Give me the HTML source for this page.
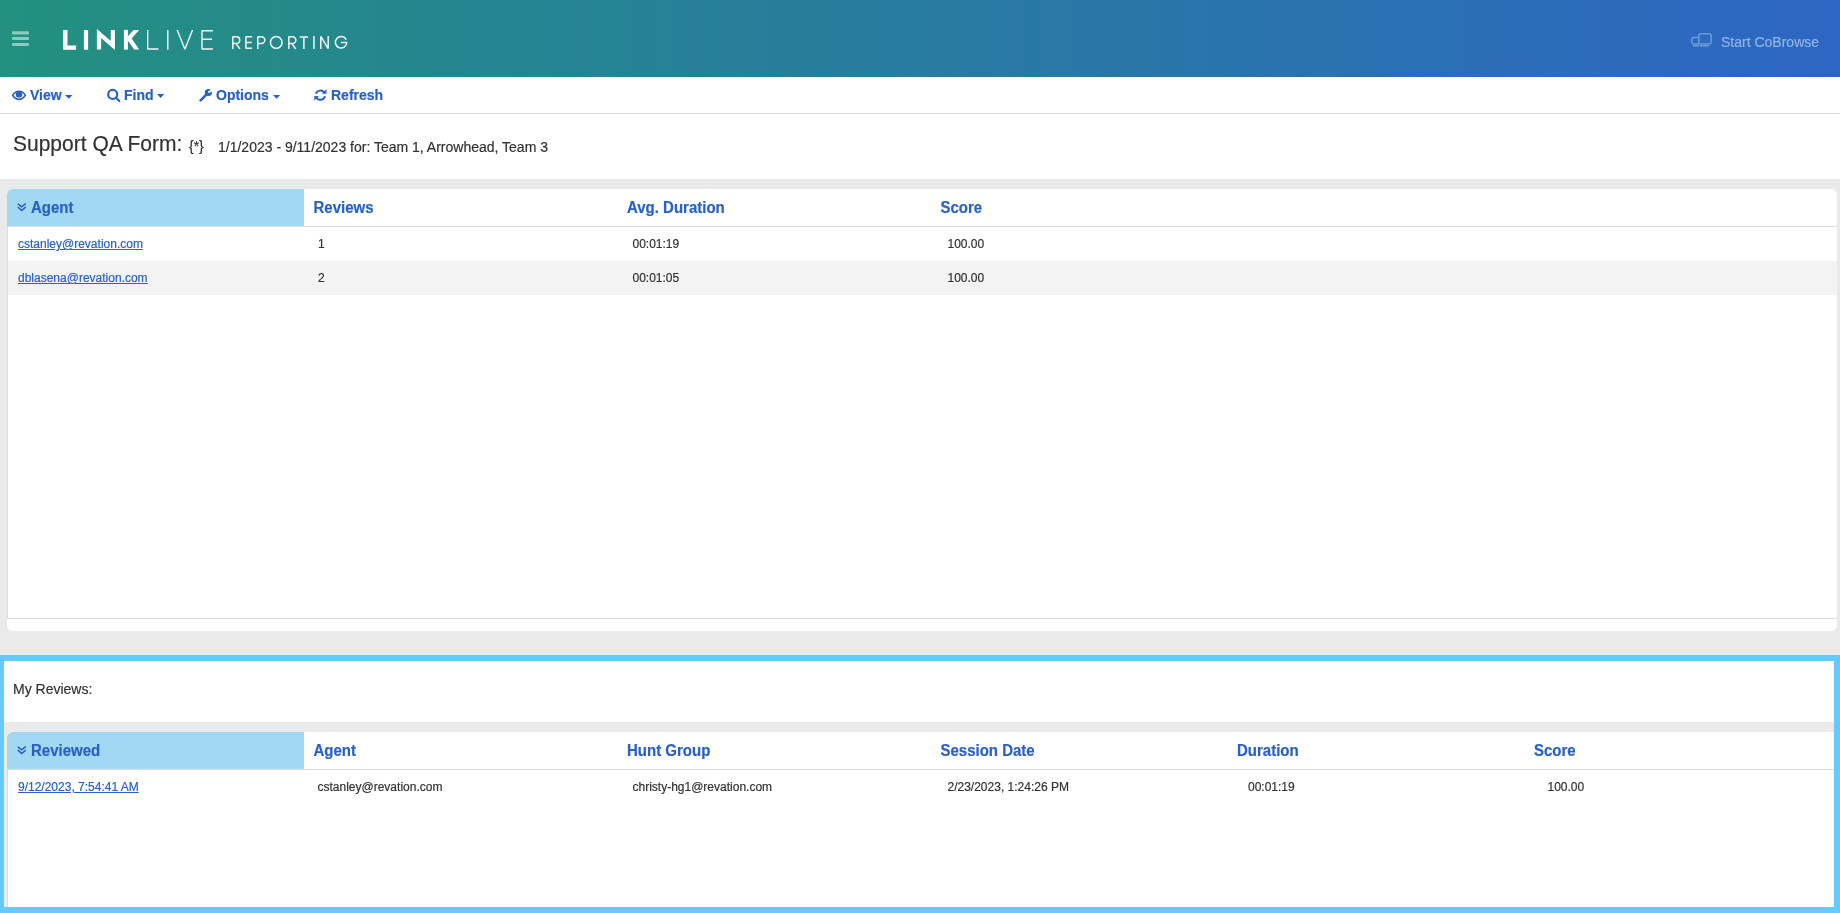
<!DOCTYPE html>
<html><head><meta charset="utf-8">
<style>
*{box-sizing:border-box;margin:0;padding:0}
body{will-change:transform}
html,body{width:1840px;height:913px;overflow:hidden;background:#fff;font-family:"Liberation Sans",sans-serif;color:#333}
.a{-webkit-text-stroke-width:0.2px}
.a{position:absolute;white-space:nowrap}
.hdr{left:0;top:0;width:1840px;height:77px;background:linear-gradient(90deg,#239080 0%,#287ba0 50%,#2d66c4 100%)}
.tbline{left:0;top:113px;width:1840px;height:1px;background:#dcdcdc}
.tbt{font-size:14px;font-weight:bold;color:#2962c4;line-height:16px;top:87px}
.gray{background:#eaeaea}
.panel{background:#fff}
.th{font-size:15px;font-weight:bold;color:#2962c4;line-height:17px;transform-origin:0 14px;transform:translateY(0.25px) scaleY(1.05)}
.td{font-size:12px;color:#333;line-height:14px}
.lnk{color:#2962c4;text-decoration:underline}
</style></head><body>
<!-- header -->
<div class="a hdr"></div>
<svg class="a" style="left:0;top:0" width="400" height="77" viewBox="0 0 400 77">
  <g fill="#8acbbf">
    <rect x="12" y="31.2" width="17" height="3.4" rx="1"/>
    <rect x="12" y="37.1" width="17" height="3" rx="1"/>
    <rect x="12" y="43" width="17" height="3" rx="1"/>
  </g>
  <g fill="#fff">
    <path d="M63.1,30H67.5V45.6H76.1V49.7H63.1Z"/>
    <rect x="83.9" y="30" width="4.2" height="19.7"/>
    <path d="M96.9,29.1L110.8,41V29.9H114.9V49.9L101.1,38V49.6H96.9Z"/>
    <rect x="123.9" y="29.9" width="4" height="19.7"/>
    <path d="M127.9,36.2L133.6,29.9H139.1L131.7,38.6L139.2,49.6H134.2L128.3,41.2L127.9,41.6Z"/>
  </g>
  <g fill="none" stroke="#f2f7f6" stroke-width="1.4" stroke-linejoin="bevel">
    <path d="M147.7,30V49H158.5"/>
    <path d="M167.8,30V49.7"/>
    <path d="M177.2,30L184.9,49.2L192.5,30"/>
    <path d="M213,30.7H202V49H213M202,39.3H212.1"/>
  </g>
  <g fill="none" stroke="#f2f7f6" stroke-width="1.5" stroke-linejoin="bevel">
    <path d="M232.8,49V36.7H236.4A3.35,3.35 0 0 1 236.4,43.4H232.8M235.9,43.4L239.9,49"/>
    <path d="M252.1,36.7H245.9V48.3H252.1M245.9,42.4H251.8"/>
    <path d="M257.8,49V36.7H261.4A3.4,3.4 0 0 1 261.4,43.5H257.8"/>
    <ellipse cx="276.25" cy="42.45" rx="5.8" ry="5.9"/>
    <path d="M288.8,49V36.7H292.4A3.35,3.35 0 0 1 292.4,43.6H288.8M291.9,43.6L295.7,49"/>
    <path d="M299.8,36.9H308M303.9,36.9V49"/>
    <path d="M313.95,36V49"/>
    <path d="M320.75,49V36.4L328.2,48.6V36"/>
    <path d="M346.2,39.6A5.75,5.75 0 1 0 346.85,42.5H340.8"/>
  </g>
</svg>
<svg class="a" style="left:1686px;top:28px" width="30" height="24" viewBox="1686 28 30 24">
  <g fill="none" stroke="#6a9ad6" stroke-width="1.6">
    <path d="M1698.9,37.5H1693.5Q1691.9,37.5 1691.9,39.1V42.4Q1691.9,44 1693.5,44H1698.9"/>
    <rect x="1698.9" y="33.8" width="12.2" height="10.2" rx="2"/>
  </g>
  <g fill="#6a9ad6">
    <rect x="1693" y="45" width="6" height="1.6"/>
    <rect x="1700" y="45" width="9" height="1.6"/>
  </g>
</svg>
<div class="a" style="left:1721px;top:34px;font-size:14px;line-height:16px;color:#90b3e4;transform-origin:0 12.6px;transform:scaleY(1.07)">Start CoBrowse</div>

<!-- toolbar -->
<div class="a tbline"></div>
<svg class="a" style="left:0;top:77px" width="400" height="36" viewBox="0 77 400 36">
  <g fill="#2962c4">
    <path fill-rule="evenodd" d="M11.6,95.3C13.8,91.7 16.2,90.4 19,90.4C21.8,90.4 24.2,91.7 26.3,95.3C24.2,98.9 21.8,100.2 19,100.2C16.2,100.2 13.8,98.9 11.6,95.3ZM13.6,95.3C15.2,97.6 17,98.5 19,98.5C21,98.5 22.8,97.6 24.4,95.3C22.8,93 21,92.1 19,92.1C17,92.1 15.2,93 13.6,95.3Z"/>
    <circle cx="19" cy="94.4" r="3.2"/>
    <path d="M65,95H72.6L68.8,98.8Z"/>
    <path d="M157,94.1H164.3L160.65,97.9Z"/>
    <path d="M273,95H280.2L276.6,98.8Z"/>
  </g>
  <g fill="none" stroke="#2962c4" stroke-width="2.2" stroke-linecap="round">
    <circle cx="112.7" cy="94.4" r="4.5"/>
    <path d="M116,97.8L119.3,101"/>
  </g>
  <g fill="#2962c4">
    <path d="M200.6,100.4L206.6,94.3" stroke="#2962c4" stroke-width="2.6" stroke-linecap="round"/>
    <circle cx="208.4" cy="92.5" r="3.6"/>
    <path d="M209,91.9L214,89.4" stroke="#fff" stroke-width="2.0" stroke-linecap="round"/>
  </g>
  <g fill="none" stroke="#2962c4" stroke-width="2">
    <path d="M315.9,93.7A4.8,4.8 0 0 1 324.3,92.6"/>
    <path d="M325,96.3A4.8,4.8 0 0 1 316.5,97.85"/>
  </g>
  <g fill="#2962c4">
    <path d="M321.8,93.7H326.5V89.2L324.3,91.2Z"/>
    <path d="M314.3,96H319L316.6,98.3L314.3,100.8Z"/>
  </g>
</svg>
<div class="a tbt" style="left:30px">View</div>
<div class="a tbt" style="left:124px">Find</div>
<div class="a tbt" style="left:216px">Options</div>
<div class="a tbt" style="left:331px">Refresh</div>

<!-- title -->
<div class="a" style="left:13px;top:131px;font-size:21px;line-height:24px;color:#333;transform-origin:0 19px;transform:translateY(0.8px) scaleY(1.071)">Support QA Form:</div>
<div class="a" style="left:189px;top:138px;font-size:14px;line-height:16px;color:#333">{*}</div>
<div class="a" style="left:218px;top:139px;font-size:14px;line-height:16px;color:#333">1/1/2023 - 9/11/2023 for: Team 1, Arrowhead, Team 3</div>

<!-- section 1 -->
<div class="a gray" style="left:0;top:179px;width:1840px;height:476px"></div>
<div class="a panel" style="left:7px;top:189px;width:1830px;height:442px;border-radius:6px"></div>
<div class="a" style="left:7px;top:189px;width:297px;height:37px;background:#a3d8f3;border-top-left-radius:6px"></div>
<div class="a" style="left:7px;top:226px;width:1830px;height:1px;background:#dcdcdc"></div>
<div class="a" style="left:7px;top:227px;width:1px;height:392px;background:#dcdcdc"></div>
<div class="a" style="left:7px;top:618px;width:1830px;height:1px;background:#dcdcdc"></div>
<div class="a" style="left:8px;top:261px;width:1829px;height:34px;background:#f3f3f3"></div>
<svg class="a" style="left:0;top:189px" width="40" height="37" viewBox="0 189 40 37">
  <g fill="none" stroke="#2962c4" stroke-width="1.5" stroke-linecap="round">
    <path d="M18.2,204.1L21.7,206.9L25.4,203.9"/>
    <path d="M18.2,207.4L21.7,210.5L25.4,207.4"/>
  </g>
</svg>
<div class="a th" style="left:31px;top:199px">Agent</div>
<div class="a th" style="left:313.5px;top:199px">Reviews</div>
<div class="a th" style="left:627px;top:199px">Avg. Duration</div>
<div class="a th" style="left:940.5px;top:199px">Score</div>

<div class="a td lnk" style="left:18px;top:237px">cstanley@revation.com</div>
<div class="a td" style="left:318px;top:237px">1</div>
<div class="a td" style="left:632.5px;top:237px">00:01:19</div>
<div class="a td" style="left:947.5px;top:237px">100.00</div>
<div class="a td lnk" style="left:18px;top:271px">dblasena@revation.com</div>
<div class="a td" style="left:318px;top:271px">2</div>
<div class="a td" style="left:632.5px;top:271px">00:01:05</div>
<div class="a td" style="left:947.5px;top:271px">100.00</div>

<!-- section 2 -->
<div class="a" style="left:0;top:655px;width:1840px;height:258px;background:#66c9ff"></div>
<div class="a panel" style="left:4px;top:661px;width:1830px;height:246px"></div>
<div class="a" style="left:13px;top:681px;font-size:14px;line-height:16px;color:#333">My Reviews:</div>
<div class="a gray" style="left:4px;top:722px;width:1830px;height:185px"></div>
<div class="a panel" style="left:7px;top:732px;width:1827px;height:175px;border-top-left-radius:6px"></div>
<div class="a" style="left:7px;top:732px;width:297px;height:37px;background:#a3d8f3;border-top-left-radius:6px"></div>
<div class="a" style="left:7px;top:769px;width:1827px;height:1px;background:#dcdcdc"></div>
<div class="a" style="left:7px;top:770px;width:1px;height:137px;background:#dcdcdc"></div>
<svg class="a" style="left:0;top:732px" width="40" height="37" viewBox="0 732 40 37">
  <g fill="none" stroke="#2962c4" stroke-width="1.5" stroke-linecap="round">
    <path d="M18.2,747.1L21.7,749.9L25.4,746.9"/>
    <path d="M18.2,750.4L21.7,753.5L25.4,750.4"/>
  </g>
</svg>
<div class="a th" style="left:31px;top:742px">Reviewed</div>
<div class="a th" style="left:313.5px;top:742px">Agent</div>
<div class="a th" style="left:627px;top:742px">Hunt Group</div>
<div class="a th" style="left:940.5px;top:742px">Session Date</div>
<div class="a th" style="left:1237px;top:742px">Duration</div>
<div class="a th" style="left:1534px;top:742px">Score</div>

<div class="a td lnk" style="left:18px;top:780px">9/12/2023, 7:54:41 AM</div>
<div class="a td" style="left:317.5px;top:780px">cstanley@revation.com</div>
<div class="a td" style="left:632.5px;top:780px">christy-hg1@revation.com</div>
<div class="a td" style="left:947.5px;top:780px">2/23/2023, 1:24:26 PM</div>
<div class="a td" style="left:1248px;top:780px">00:01:19</div>
<div class="a td" style="left:1547.5px;top:780px">100.00</div>
</body></html>
